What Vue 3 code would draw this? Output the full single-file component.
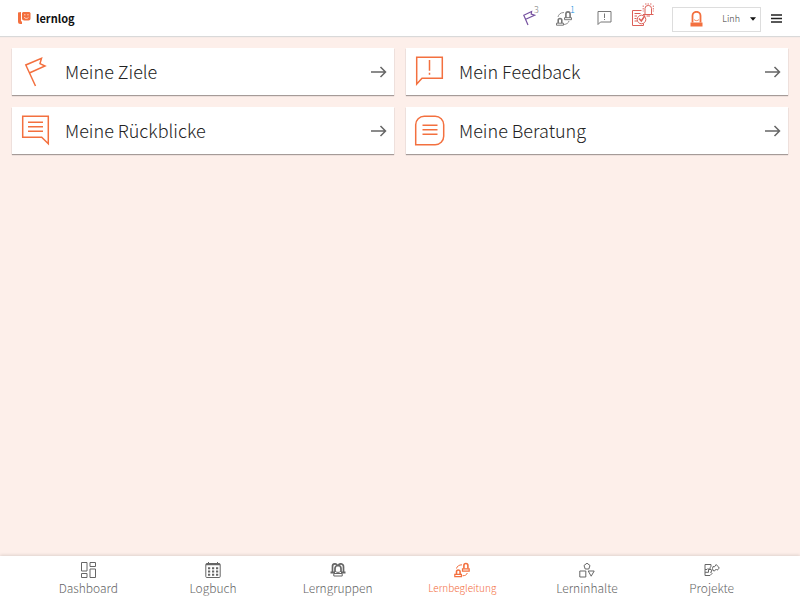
<script setup>
import { ref } from "vue";

const cards = [
  { title: "Meine Ziele", icon: "flag" },
  { title: "Mein Feedback", icon: "feedback" },
  { title: "Meine Rückblicke", icon: "review" },
  { title: "Meine Beratung", icon: "advice" },
];

const tabs = [
  { label: "Dashboard", icon: "dashboard" },
  { label: "Logbuch", icon: "logbook" },
  { label: "Lerngruppen", icon: "groups" },
  { label: "Lernbegleitung", icon: "guidance" },
  { label: "Lerninhalte", icon: "contents" },
  { label: "Projekte", icon: "projects" },
];

const activeTab = ref("guidance");
</script>

<template>
  <div class="page">
    <header class="topbar">
      <a class="brand" href="#">
        <svg width="13" height="13" viewBox="0 0 13 13" aria-hidden="true">
          <path d="M0 .5 3 0v8.500c0 .6.3 1 1 1V12H2.500C.8 12 0 11.200 0 9.500z" fill="#f3703f" />
          <path d="M4 1 5 0h6.500l1 1v5.500c0 1.200-.8 2-2 2H6.200c-1.300 0-2.200-.8-2.200-2z" fill="#f3703f" />
          <path d="M6 2.800h1.500M9.200 2.800h1.500M6 5.200c1 1.600 3.600 1.600 4.600 0" fill="none" stroke="#fff" stroke-width=".7" />
        </svg>
        <span>lernlog</span>
      </a>

      <nav class="notices" aria-label="Hinweise">
        <button class="notice purple" type="button" aria-label="Ziele">
          <svg width="13" height="16" viewBox="0 0 13 16">
            <path d="M5 15 .8 5.200 8.600 1.500 8.200 4.100 11.500 5.200 2.700 9.200" fill="none" stroke="currentColor" stroke-width="1.200" />
          </svg>
          <span class="count">3</span>
        </button>
        <button class="notice" type="button" aria-label="Lernbegleitung">
          <svg width="17" height="17" viewBox="0 0 17 17">
            <g fill="none" stroke="currentColor">
              <path d="M2.200 13V10.300a1.800 1.800 0 0 1 3.600 0V13M9.900 8V4a2.100 2.100 0 0 1 4.200 0V8" stroke-width="1.600" />
              <path d="M.5 13.200h7v2h-7zM8.500 7.700h7v2h-7z" />
              <path d="M2 7C2.500 4.500 4.500 2.500 8 2.500M13 11c-.6 2-2.200 3.200-5 3.500" stroke-width=".8" />
            </g>
          </svg>
          <span class="count blue">1</span>
        </button>
        <button class="notice plain" type="button" aria-label="Feedback">
          <svg width="15" height="16" viewBox="0 0 15 16">
            <path d="M1 1.500h13v10.500H3.500L1 14.500zM7.500 3.500v4.500M7.500 9v1" fill="none" stroke="currentColor" />
          </svg>
        </button>
        <button class="notice red" type="button" aria-label="Aufgaben">
          <svg width="23" height="24" viewBox="0 0 23 24">
            <g fill="none" stroke="currentColor">
              <path d="M10.500 7.500H1.500v15H12.500v-2M3.500 10.500h6M3.500 13h2.500M3.500 15.500h2M3.500 18h2.500" />
              <circle cx="10.500" cy="16.500" r="4.300" />
              <path d="m8 15.500 2.300 2.500L14 12.500" stroke-width="1.500" />
              <path d="M14 11.500V5.500a3 3 0 0 1 3-3h.5a3 3 0 0 1 3 3v6M12 11.500h10.500M15.500 13h3.500" />
              <path d="M12.200 2.500v6M22.300 2.500v6M14 1h6.500" stroke-dasharray="1.500 1" stroke-width=".9" />
            </g>
          </svg>
        </button>
      </nav>

      <button class="account" type="button">
        <svg width="13" height="16" viewBox="0 0 13 16" aria-hidden="true">
          <path d="M2.500 11.500V4.800a4 4 0 0 1 8 0v6.700" fill="#fff" stroke="#f3703f" stroke-width="1.800" />
          <path d="M4 8.500c1 1.500 4 1.500 5 0" fill="none" stroke="#f3703f" stroke-width=".8" />
          <path d="M.5 11.500h12v4H.5z" fill="#f3703f" />
        </svg>
        <span class="user">Linh</span>
        <svg width="6" height="4" viewBox="0 0 6 4" aria-hidden="true">
          <path d="M0 .3h6L3 3.700z" fill="#111" />
        </svg>
      </button>
      <button class="menu" type="button" aria-label="Menü">
        <svg width="11" height="9" viewBox="0 0 11 9">
          <path d="M0 1h11M0 4.500h11M0 8h11" stroke="#222" stroke-width="1.700" />
        </svg>
      </button>
    </header>

    <main class="content">
      <a v-for="card in cards" :key="card.icon" class="card" href="#">
        <svg class="card-icon" width="32" height="32" viewBox="0 0 32 32" aria-hidden="true">
          <g fill="none" stroke="currentColor" stroke-width="1.500">
            <path v-if="card.icon === 'flag'" d="M15.500 30 5.800 9 21.500 2.200 20 7.600 25 10 9.900 16.700" />
            <path v-else-if="card.icon === 'feedback'" d="M2.700 1.200h25.600v21H8L2.700 28zM15.500 4v10.700M15.500 16.800v2" />
            <path v-else-if="card.icon === 'review'" d="M2.700 1.200h25.600v27.600l-6.600-6.600h-19zM8 7.200h15M8 11.700h15M8 16.200h15" />
            <path v-else d="M1.700 29.800V9.700a8.500 8.500 0 0 1 8.500-8.500h11A8.500 8.500 0 0 1 29.700 9.700v11.600a8.500 8.500 0 0 1-8.500 8.500zM8.500 10.200h15M8.500 14.800h15M8.500 19.200h15" />
          </g>
        </svg>
        <span class="card-title">{{ card.title }}</span>
        <svg class="arrow" width="16" height="12" viewBox="0 0 16 12" aria-hidden="true">
          <path d="M0 6h14.500M9.500 1l5 5-5 5" fill="none" stroke="currentColor" stroke-width="1.500" />
        </svg>
      </a>
    </main>

    <nav class="tabbar" aria-label="Hauptnavigation">
      <a
        v-for="tab in tabs"
        :key="tab.icon"
        class="tab"
        :class="{ active: tab.icon === activeTab }"
        href="#"
        @click.prevent="activeTab = tab.icon"
      >
        <svg width="16" height="16" viewBox="0 0 16 16" aria-hidden="true">
          <g fill="none" stroke="currentColor">
            <path v-if="tab.icon === 'dashboard'" d="M1.500.500h5.500v8.500h-5.500zM10 .500h5.500v4h-5.500zM1.500 11.500h5.500v4h-5.500zM10 7h5.500v8.500h-5.500z" />
            <template v-else-if="tab.icon === 'logbook'">
              <rect x=".8" y="1.500" width="14.400" height="14" rx="1" />
              <path d="M1 2.500h14" stroke-width="1.500" />
              <path d="M3.500 0v2.500M12.500 0v2.500" />
              <path d="M3 6.200h2.200M7 6.200h2.200M11 6.200h2.200M3 9.500h2.200M7 9.500h2.200M11 9.500h2.200M3 12.800h2.200M7 12.800h2.200M11 12.800h2.200" stroke-width="2" />
            </template>
            <template v-else-if="tab.icon === 'groups'">
              <path d="M2.500 10V4.800a2.600 2.600 0 0 1 5.200-.5M13.500 10V4.800a2.600 2.600 0 0 0-5.200-.5M5 10V6.500a3 3 0 0 1 6 0V10" stroke-width="1.700" />
              <path d="M.5 10.500h4.500M11 10.500h4.500" stroke-width="2" />
              <path d="M5.500 9.500c1.500 1.200 3.500 1.200 5 0M3.800 11.500h8.400v2.500H3.800z" />
            </template>
            <template v-else-if="tab.icon === 'guidance'">
              <path d="M2.500 12V9.800a1.800 1.800 0 0 1 3.600 0V12M9.900 6.500V3.500a2 2 0 0 1 4 0v3" stroke-width="1.600" />
              <path d="M.8 12.400h6.600v2.300H.8zM8.500 6.800h6.700v2.300H8.500z" stroke-width="1.200" />
              <path d="M2.500 6.500C3 4.300 5 2.800 8 2.800M13.300 11c-.6 1.800-2 2.700-4.800 2.800" />
            </template>
            <path v-else-if="tab.icon === 'contents'" d="m8 1.200 3 2.300-1.200 3.500H6.200L5 3.500zM.8 9h6v6h-6zM9.200 9h6l-3 5.200z" />
            <path v-else d="M1 2.500h6v2.200L5.500 6 7 7.500H4.500L4 6.500 3 7.500H1zM1 7.500v6h5l2-2-1.500-1.500L8 9 7 7.500M4.500 7.500v2.800H1M8.500 6.500l.5-2 1.500.3L12.200 2.500 14 4.500 15.300 6.200 13 8.200 12 7.200 10.500 9 9 8.500z" />
          </g>
        </svg>
        <span>{{ tab.label }}</span>
      </a>
    </nav>
  </div>
</template>

<style>
body {
  margin: 0;
}
</style>

<style scoped>
.page {
  min-height: 100vh;
  display: flex;
  flex-direction: column;
  background: #fdefea;
  color: #222;
  font-family: "Noto Sans CJK SC", "Noto Sans", sans-serif;
  font-weight: 300;
}

.page *,
.page {
  box-sizing: border-box;
}

a {
  color: inherit;
  text-decoration: none;
}

button {
  padding: 0;
  border: none;
  background: none;
  color: inherit;
  font: inherit;
  cursor: pointer;
}

svg {
  display: block;
  flex-shrink: 0;
}

.topbar {
  height: 36px;
  padding: 0 18px;
  display: flex;
  align-items: center;
  background: #fff;
  box-shadow: 0 1px 1px #d9d9d9;
}

.brand {
  display: flex;
  align-items: center;
  gap: 5px;
  color: #111;
  font-size: 11px;
  font-weight: 700;
  line-height: 16px;
}

.notices {
  margin-left: auto;
  display: flex;
  align-items: center;
}

.notice {
  position: relative;
  width: 34px;
  height: 24px;
  margin-right: 7px;
  color: #777;
}

.notice.plain {
  margin-right: 0;
}

.notice.purple {
  width: 26px;
  color: #7652a0;
}

.notice.red {
  width: 23px;
  margin-right: 18px;
  margin-bottom: 6px;
  color: #dc6058;
}

.count {
  position: absolute;
  top: -1px;
  left: 11px;
  color: #777;
  font-size: 9px;
  line-height: 10px;
}

.count.blue {
  left: 14px;
  color: #1592dc;
}

.account {
  width: 89px;
  height: 25px;
  margin-top: 2px;
  padding: 0 4px 0 17px;
  display: flex;
  align-items: center;
  border: 1px solid #ddd;
  background: #fff;
}

.user {
  margin-left: auto;
  margin-right: 10px;
  color: #333;
  font-size: 9px;
  line-height: 14px;
}

.menu {
  margin-left: 10px;
}

.content {
  flex: 1;
  padding: 12px;
  display: grid;
  grid-template-columns: 1fr 1fr;
  align-content: start;
  gap: 12px;
}

.card {
  height: 47px;
  padding: 0 7px 0 8px;
  display: flex;
  align-items: center;
  background: #fff;
  box-shadow: 0 1px 1px rgba(0, 0, 0, 0.35);
}

.card-icon {
  color: #f3703f;
}

.card-title {
  flex: 1;
  margin-left: 13px;
  padding-bottom: 2px;
  font-size: 18px;
  line-height: 24px;
}

.arrow {
  color: #666;
}

.tabbar {
  height: 44px;
  padding: 6px 26px 0;
  display: grid;
  grid-template-columns: repeat(6, 1fr);
  background: #fff;
  box-shadow: 0 -1px 3px rgba(0, 0, 0, 0.12);
}

.tab {
  display: flex;
  flex-direction: column;
  align-items: center;
  gap: 2px;
  color: #666;
  font-size: 12px;
  line-height: 16px;
}

.tab.active {
  color: #f3703f;
  font-size: 10px;
}
</style>
